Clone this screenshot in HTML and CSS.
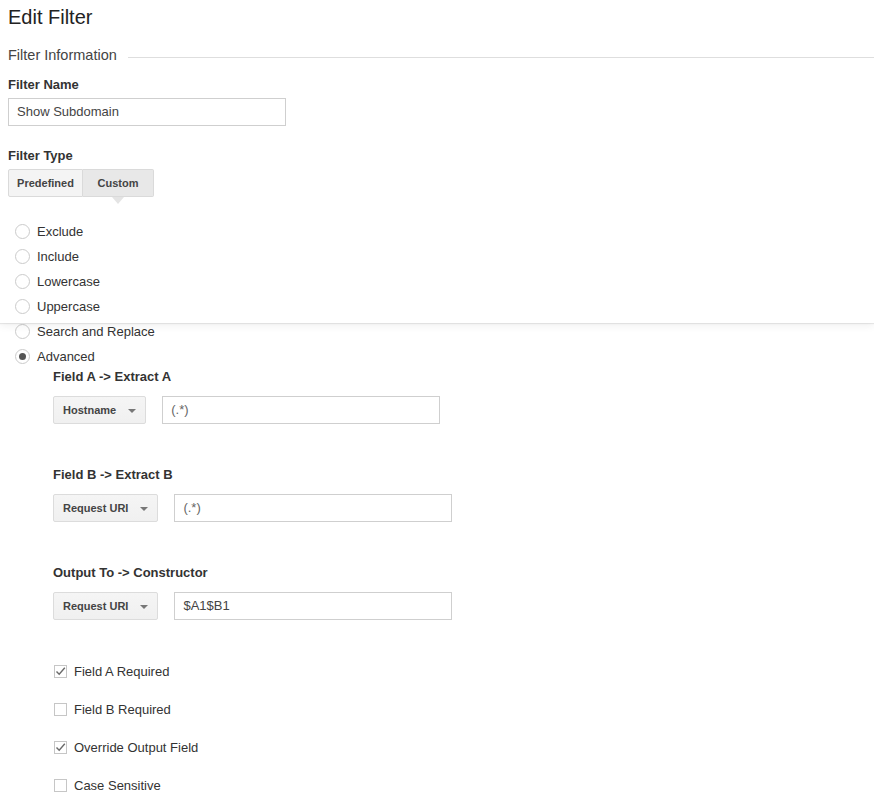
FILE: index.html
```html
<!DOCTYPE html>
<html>
<head>
<meta charset="utf-8">
<link rel="stylesheet" href="styles.css">
</head>
<body>
<div class="panel">
  <h1 class="title">Edit Filter</h1>
  <div class="legend"><span>Filter Information</span><span class="rule"></span></div>
  <div class="label lbl-name">Filter Name</div>
  <div class="input w-name">Show Subdomain</div>
  <div class="label lbl-type">Filter Type</div>
  <div class="seg">
    <div class="seg-btn pre">Predefined</div>
    <div class="seg-btn cus active">Custom</div>
  </div>
  <div class="radios first">
    <div class="radio"><span class="circle"></span>Exclude</div>
    <div class="radio"><span class="circle"></span>Include</div>
    <div class="radio"><span class="circle"></span>Lowercase</div>
    <div class="radio"><span class="circle"></span>Uppercase</div>
  </div>
</div>
<div class="content">
  <div class="radios">
    <div class="radio"><span class="circle"></span>Search and Replace</div>
    <div class="radio"><span class="circle on"></span>Advanced</div>
  </div>
  <div class="advanced">
    <div class="section s1">
      <div class="label">Field A -&gt; Extract A</div>
      <div class="row">
        <div class="dd">Hostname<span class="caret"></span></div>
        <div class="input w-field">(.*)</div>
      </div>
    </div>
    <div class="section">
      <div class="label">Field B -&gt; Extract B</div>
      <div class="row">
        <div class="dd">Request URI<span class="caret"></span></div>
        <div class="input w-field">(.*)</div>
      </div>
    </div>
    <div class="section">
      <div class="label">Output To -&gt; Constructor</div>
      <div class="row">
        <div class="dd">Request URI<span class="caret"></span></div>
        <div class="input w-field dark">$A1$B1</div>
      </div>
    </div>
    <div class="checks">
      <div class="check"><span class="box"><svg viewBox="0 0 13 13" width="13" height="13"><polyline points="2.5,6.5 5.2,9.3 10.8,2.8" fill="none" stroke="#6a6a6a" stroke-width="1.4"/></svg></span>Field A Required</div>
      <div class="check"><span class="box"></span>Field B Required</div>
      <div class="check"><span class="box"><svg viewBox="0 0 13 13" width="13" height="13"><polyline points="2.5,6.5 5.2,9.3 10.8,2.8" fill="none" stroke="#6a6a6a" stroke-width="1.4"/></svg></span>Override Output Field</div>
      <div class="check"><span class="box"></span>Case Sensitive</div>
    </div>
  </div>
</div>
</body>
</html>
```
FILE: styles.css
```css
html, body {
  margin: 0;
  padding: 0;
  background: #fff;
  font-family: "Liberation Sans", Arial, sans-serif;
  color: #333;
}
.panel {
  position: relative;
  z-index: 1;
  background: #fff;
  padding: 0 8px 8px;
  box-shadow: 0 1px 1px rgba(0,0,0,0.08), 0 3px 8px rgba(0,0,0,0.06);
}
.title {
  margin: 0;
  font-size: 20px;
  font-weight: normal;
  line-height: 35px;
  color: #222;
}
.legend {
  margin-top: 11px;
  display: flex;
  align-items: center;
  font-size: 14.5px;
  line-height: 18px;
  color: #444;
}
.legend .rule {
  flex: 1;
  height: 1px;
  background: #dedede;
  margin-left: 11px;
  margin-right: -8px;
  margin-top: 4px;
}
.label {
  font-size: 13px;
  font-weight: bold;
  line-height: 18px;
  color: #333;
}
.lbl-name { margin-top: 12px; }
.lbl-type { margin-top: 21px; }
.input {
  box-sizing: border-box;
  height: 28px;
  border: 1px solid #cfcfcf;
  background: #fff;
  font-size: 13px;
  line-height: 26px;
  padding-left: 8px;
  color: #666;
}
.w-name {
  margin-top: 4px;
  width: 278px;
  color: #444;
}
.seg {
  margin-top: 4px;
  display: flex;
}
.seg-btn {
  box-sizing: border-box;
  height: 28px;
  font-size: 11px;
  font-weight: bold;
  line-height: 26px;
  text-align: center;
  color: #444;
  border: 1px solid #dadada;
  background: #f4f4f4;
}
.seg-btn.pre { width: 75px; border-radius: 2px 0 0 2px; }
.seg-btn.cus {
  width: 71px;
  border-left: none;
  border-radius: 0 2px 2px 0;
  position: relative;
  background: #e8e8e8;
}
.seg-btn.cus::after {
  content: "";
  position: absolute;
  left: 50%;
  bottom: -8px;
  margin-left: -6px;
  border-left: 6px solid transparent;
  border-right: 6px solid transparent;
  border-top: 7px solid #e4e4e4;
}
.radios {
  display: flex;
  flex-direction: column;
  gap: 8px;
}
.radios.first { margin-top: 26px; }
.radio {
  display: flex;
  align-items: center;
  font-size: 13px;
  line-height: 17px;
  height: 17px;
  color: #333;
}
.circle {
  box-sizing: border-box;
  width: 15px;
  height: 15px;
  border-radius: 50%;
  border: 1px solid #cbcbcb;
  margin-left: 7px;
  margin-right: 7px;
  display: flex;
  align-items: center;
  justify-content: center;
}
.circle.on::after {
  content: "";
  width: 7px;
  height: 7px;
  border-radius: 50%;
  background: #555;
}
.content {
  padding: 0 8px;
}
.advanced {
  padding-left: 45px;
}
.section { margin-top: 42px; }
.section.s1 { margin-top: 3px; }
.section .label { margin-bottom: 10px; }
.row {
  display: flex;
  gap: 16px;
}
.dd {
  box-sizing: border-box;
  height: 28px;
  display: flex;
  align-items: center;
  padding: 0 9px;
  font-size: 11px;
  font-weight: bold;
  color: #444;
  border: 1px solid #dcdcdc;
  border-radius: 2px;
  background: linear-gradient(#f5f5f5, #f0f0f0);
}
.caret {
  margin-left: 12px;
  width: 0;
  height: 0;
  border-left: 4px solid transparent;
  border-right: 4px solid transparent;
  border-top: 4px solid #777;
  margin-top: 2px;
}
.w-field { width: 278px; }
.input.dark { color: #444; }
.checks {
  margin-top: 43px;
  display: flex;
  flex-direction: column;
  gap: 21px;
}
.check {
  display: flex;
  align-items: center;
  height: 17px;
  font-size: 13px;
  color: #333;
}
.box {
  box-sizing: border-box;
  width: 13px;
  height: 13px;
  border: 1px solid #c6c6c6;
  margin-left: 1px;
  margin-right: 7px;
  position: relative;
}
.box svg {
  position: absolute;
  left: -1px;
  top: -1px;
}
```
